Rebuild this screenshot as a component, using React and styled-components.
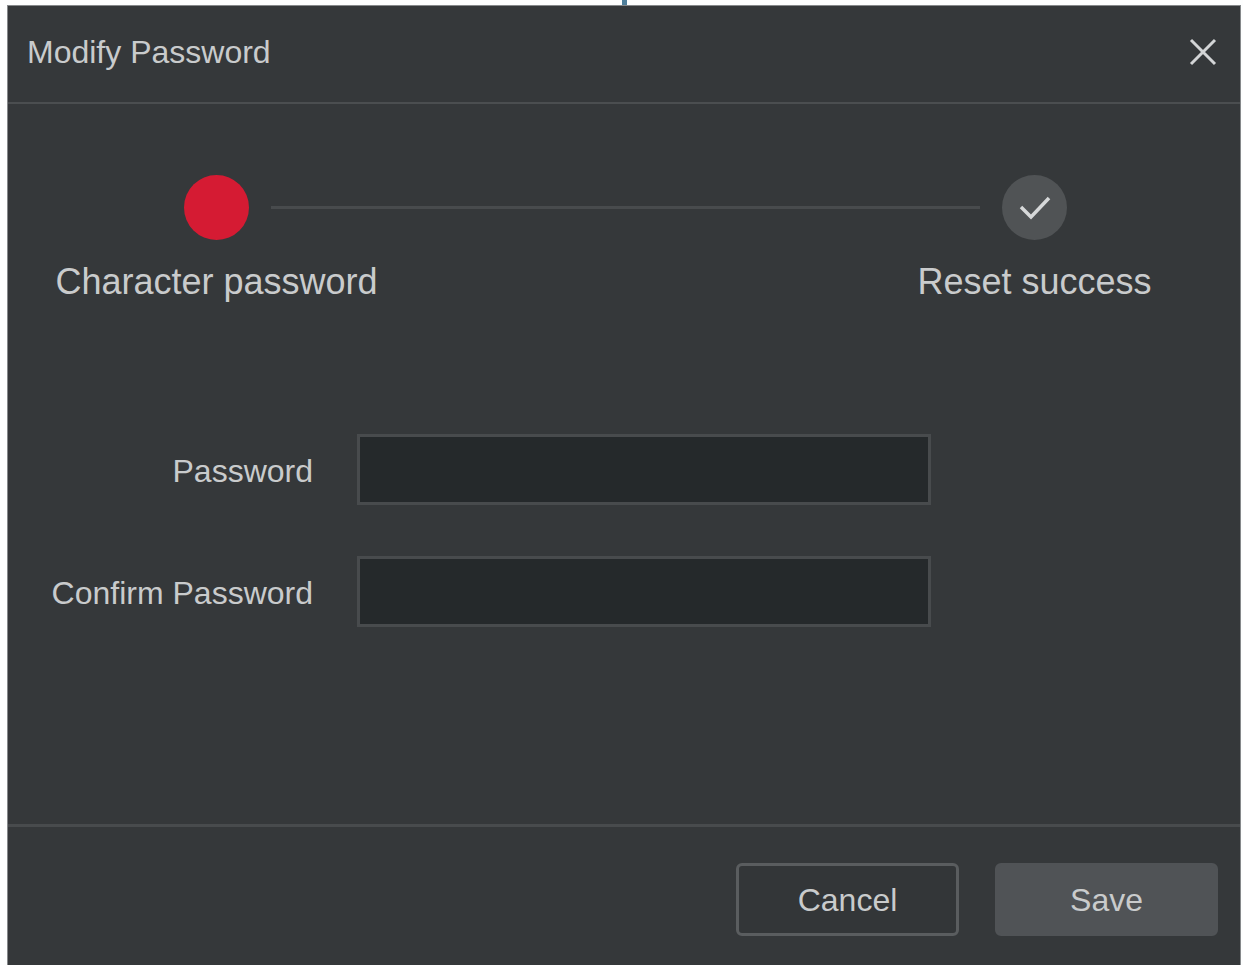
import { useState } from "react";
import styled, { createGlobalStyle } from "styled-components";

const GlobalStyle = createGlobalStyle`
  * {
    box-sizing: border-box;
  }

  body {
    margin: 0;
    background: #fdfefe;
    color: #c9cbcc;
    font-family: "Liberation Sans", Arial, sans-serif;
    font-size: 32px;
  }
`;

const Page = styled.div`
  display: flex;
  flex-direction: column;
  min-height: 100vh;
  padding: 0 2px 0 7px;
`;

const TopStrip = styled.div`
  display: flex;
  justify-content: center;
  height: 5px;
`;

const Marker = styled.span`
  width: 5px;
  background: #4f7f9b;
`;

const Dialog = styled.section`
  display: flex;
  flex: 1;
  flex-direction: column;
  border: 1px solid #85888a;
  border-bottom: 0;
  background: #35383a;
`;

const Header = styled.header`
  display: flex;
  align-items: center;
  justify-content: space-between;
  height: 98px;
  padding: 0 22px 4px 19px;
  border-bottom: 2px solid #4b4e50;
`;

const Title = styled.h1`
  margin: 0;
  font-size: 32px;
  font-weight: 400;
  line-height: 40px;
`;

const CloseButton = styled.button`
  display: flex;
  padding: 0;
  border: 0;
  background: none;
  color: #d3d5d6;
  cursor: pointer;
`;

const Content = styled.main`
  flex: 1;
`;

const Steps = styled.ol`
  display: flex;
  gap: 22px;
  margin: 0;
  padding: 71px 173px 0 176px;
  list-style: none;
`;

const Step = styled.li`
  display: flex;
  flex-direction: column;
  align-items: center;
  gap: 20px;
  width: 65px;
  font-size: 36px;
  line-height: 44px;
  white-space: nowrap;
`;

const StepDot = styled.span`
  display: flex;
  align-items: center;
  justify-content: center;
  width: 65px;
  height: 65px;
  border-radius: 50%;
  background: ${({ $active }) => ($active ? "#d51b33" : "#505355")};
`;

const StepLine = styled.li`
  flex: 1;
  height: 3px;
  margin-top: 31px;
  background: #484b4d;
`;

const Form = styled.form`
  display: grid;
  grid-template-columns: 305px 1fr;
  align-items: center;
  gap: 51px 44px;
  padding: 130px 309px 60px 0;
`;

const Label = styled.label`
  padding-top: 2px;
  line-height: 40px;
  text-align: right;
`;

const Input = styled.input`
  width: 100%;
  height: 71px;
  padding: 0 16px;
  border: 3px solid #484b4d;
  outline: none;
  background: #25292b;
  color: inherit;
  font: inherit;
`;

const Footer = styled.footer`
  display: flex;
  justify-content: flex-end;
  gap: 36px;
  padding: 36px 22px 29px;
  border-top: 3px solid #484b4d;
`;

const Button = styled.button`
  width: 223px;
  height: 73px;
  padding: 2px 0 0;
  border: 3px solid ${({ $primary }) => ($primary ? "#505356" : "#5a5d5f")};
  border-radius: 6px;
  background: ${({ $primary }) => ($primary ? "#505356" : "#333638")};
  color: inherit;
  font: inherit;
  cursor: pointer;
`;

const App = () => {
  const [password, setPassword] = useState("");
  const [confirm, setConfirm] = useState("");

  return (
    <>
      <GlobalStyle />
      <Page>
        <TopStrip>
          <Marker />
        </TopStrip>
        <Dialog role="dialog" aria-labelledby="dialog-title">
          <Header>
            <Title id="dialog-title">Modify Password</Title>
            <CloseButton type="button" aria-label="Close">
              <svg width="30" height="30" viewBox="0 0 30 30" fill="none">
                <path
                  d="M3 3 27 27M27 3 3 27"
                  stroke="currentColor"
                  strokeWidth="3"
                />
              </svg>
            </CloseButton>
          </Header>

          <Content>
            <Steps>
              <Step>
                <StepDot $active />
                Character password
              </Step>
              <StepLine aria-hidden="true" />
              <Step>
                <StepDot>
                  <svg width="34" height="26" viewBox="0 0 34 26" fill="none">
                    <path
                      d="M3 12 13 22 31 3"
                      stroke="#d6d8d9"
                      strokeWidth="3.5"
                    />
                  </svg>
                </StepDot>
                Reset success
              </Step>
            </Steps>

            <Form id="password-form" onSubmit={(e) => e.preventDefault()}>
              <Label htmlFor="password">Password</Label>
              <Input
                id="password"
                type="password"
                value={password}
                onChange={(e) => setPassword(e.target.value)}
              />
              <Label htmlFor="confirm">Confirm Password</Label>
              <Input
                id="confirm"
                type="password"
                value={confirm}
                onChange={(e) => setConfirm(e.target.value)}
              />
            </Form>
          </Content>

          <Footer>
            <Button type="button">Cancel</Button>
            <Button type="submit" form="password-form" $primary>
              Save
            </Button>
          </Footer>
        </Dialog>
      </Page>
    </>
  );
};

export default App;
